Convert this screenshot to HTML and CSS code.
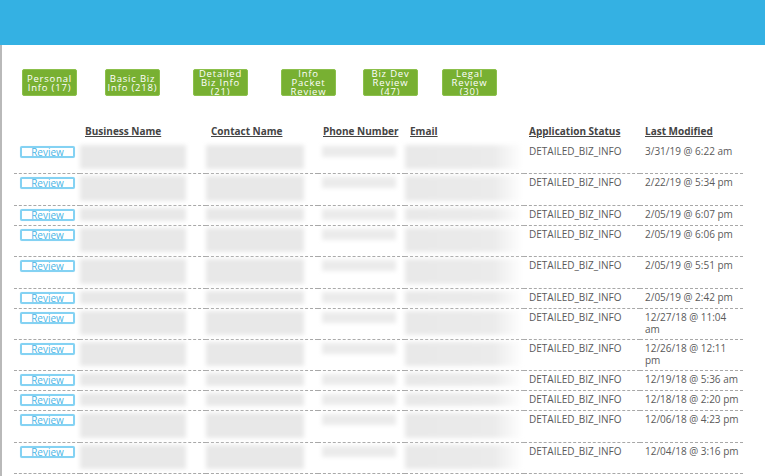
FILE: index.html
```html
<!DOCTYPE html>
<html>
<head>
<meta charset="utf-8">
<link rel="stylesheet" href="styles.css">
</head>
<body>
<div class="topbar"></div>
<div class="main">
  <div class="tabs">
    <div class="tab">Personal Info (17)</div>
    <div class="tab">Basic Biz Info (218)</div>
    <div class="tab">Detailed Biz Info (21)</div>
    <div class="tab">Info Packet Review</div>
    <div class="tab">Biz Dev Review (47)</div>
    <div class="tab">Legal Review (30)</div>
  </div>
  <table class="apps">
    <colgroup>
      <col class="c1"><col class="c2"><col class="c3"><col class="c4"><col class="c5"><col class="c6"><col class="c7">
    </colgroup>
    <thead>
      <tr>
        <th></th>
        <th>Business Name</th>
        <th>Contact Name</th>
        <th>Phone Number</th>
        <th>Email</th>
        <th>Application Status</th>
        <th>Last Modified</th>
      </tr>
    </thead>
    <tbody>
      <tr class="tall"><td><button class="review">Review</button></td><td><div class="bl biz"></div></td><td><div class="bl con"></div></td><td><div class="bl ph"></div></td><td><div class="bl em"></div></td><td>DETAILED_BIZ_INFO</td><td>3/31/19 @ 6:22 am</td></tr>
      <tr class="tall"><td><button class="review">Review</button></td><td><div class="bl biz"></div></td><td><div class="bl con"></div></td><td><div class="bl ph"></div></td><td><div class="bl em"></div></td><td>DETAILED_BIZ_INFO</td><td>2/22/19 @ 5:34 pm</td></tr>
      <tr class="short"><td><button class="review">Review</button></td><td><div class="bl biz"></div></td><td><div class="bl con"></div></td><td><div class="bl ph"></div></td><td><div class="bl em"></div></td><td>DETAILED_BIZ_INFO</td><td>2/05/19 @ 6:07 pm</td></tr>
      <tr class="tall"><td><button class="review">Review</button></td><td><div class="bl biz"></div></td><td><div class="bl con"></div></td><td><div class="bl ph"></div></td><td><div class="bl em"></div></td><td>DETAILED_BIZ_INFO</td><td>2/05/19 @ 6:06 pm</td></tr>
      <tr class="tall"><td><button class="review">Review</button></td><td><div class="bl biz"></div></td><td><div class="bl con"></div></td><td><div class="bl ph"></div></td><td><div class="bl em"></div></td><td>DETAILED_BIZ_INFO</td><td>2/05/19 @ 5:51 pm</td></tr>
      <tr class="short"><td><button class="review">Review</button></td><td><div class="bl biz"></div></td><td><div class="bl con"></div></td><td><div class="bl ph"></div></td><td><div class="bl em"></div></td><td>DETAILED_BIZ_INFO</td><td>2/05/19 @ 2:42 pm</td></tr>
      <tr class="tall"><td><button class="review">Review</button></td><td><div class="bl biz"></div></td><td><div class="bl con"></div></td><td><div class="bl ph"></div></td><td><div class="bl em"></div></td><td>DETAILED_BIZ_INFO</td><td>12/27/18 @ 11:04 am</td></tr>
      <tr class="tall"><td><button class="review">Review</button></td><td><div class="bl biz"></div></td><td><div class="bl con"></div></td><td><div class="bl ph"></div></td><td><div class="bl em"></div></td><td>DETAILED_BIZ_INFO</td><td>12/26/18 @ 12:11 pm</td></tr>
      <tr class="short"><td><button class="review">Review</button></td><td><div class="bl biz"></div></td><td><div class="bl con"></div></td><td><div class="bl ph"></div></td><td><div class="bl em"></div></td><td>DETAILED_BIZ_INFO</td><td>12/19/18 @ 5:36 am</td></tr>
      <tr class="short"><td><button class="review">Review</button></td><td><div class="bl biz"></div></td><td><div class="bl con"></div></td><td><div class="bl ph"></div></td><td><div class="bl em"></div></td><td>DETAILED_BIZ_INFO</td><td>12/18/18 @ 2:20 pm</td></tr>
      <tr class="tall"><td><button class="review">Review</button></td><td><div class="bl biz"></div></td><td><div class="bl con"></div></td><td><div class="bl ph"></div></td><td><div class="bl em"></div></td><td>DETAILED_BIZ_INFO</td><td>12/06/18 @ 4:23 pm</td></tr>
      <tr class="tall"><td><button class="review">Review</button></td><td><div class="bl biz"></div></td><td><div class="bl con"></div></td><td><div class="bl ph"></div></td><td><div class="bl em"></div></td><td>DETAILED_BIZ_INFO</td><td>12/04/18 @ 3:16 pm</td></tr>
    </tbody>
  </table>
</div>
</body>
</html>
```

FILE: styles.css
```css
html, body {
  margin: 0;
  padding: 0;
  background: #ffffff;
  font-family: "Open Sans", "Liberation Sans", sans-serif;
  overflow: hidden;
}

.topbar {
  height: 45px;
  background: #34b1e3;
}

.main {
  border-left: 2px solid #b9b9b9;
  min-height: 431px;
  box-sizing: border-box;
  padding-top: 24px;
}

.tabs {
  display: grid;
  grid-template-columns: 83px 88px 88px 82px 79px 55px;
  padding-left: 20px;
}

.tab {
  width: 55px;
  height: 27px;
  box-sizing: border-box;
  background: #78b032;
  border: 1px solid #8cc04c;
  border-radius: 2px;
  color: #ffffff;
  font-size: 9.5px;
  line-height: 9px;
  letter-spacing: 0.8px;
  text-align: center;
  display: flex;
  align-items: center;
  justify-content: center;
  overflow: hidden;
  padding: 0 1px;
}

.apps {
  margin-top: 29px;
  margin-left: 12px;
  width: 729px;
  border-collapse: collapse;
  table-layout: fixed;
}

.c1 { width: 66px; }
.c2 { width: 126px; }
.c3 { width: 112px; }
.c4 { width: 87px; }
.c5 { width: 119px; }
.c6 { width: 116px; }
.c7 { width: 103px; }

.apps th {
  text-align: left;
  font-size: 10px;
  line-height: 12px;
  font-weight: 700;
  color: #444444;
  text-decoration: underline;
  padding: 0 0 6px 5px;
  white-space: nowrap;
}

.apps td {
  vertical-align: top;
  font-size: 10px;
  line-height: 12px;
  color: #5a5a5a;
  padding: 2px 0 4px 5px;
}

.apps tbody tr {
  border-bottom: 1px dashed #a8a8a8;
}

.apps td:nth-child(1) { padding-left: 6px; }
.apps td:nth-child(2),
.apps td:nth-child(3),
.apps td:nth-child(4),
.apps td:nth-child(5) { padding-left: 0; }

.review {
  display: block;
  width: 55px;
  height: 12px;
  margin: 1px 0 0 0;
  padding: 0;
  box-sizing: border-box;
  border: 2px solid #84d2f3;
  border-radius: 2px;
  background: #ffffff;
  color: #4cb6e6;
  font-family: "Open Sans", "Liberation Sans", sans-serif;
  font-size: 10px;
  line-height: 8px;
  text-align: center;
  box-shadow: 0 0 1px #bfe7f8;
}

.bl {
  filter: blur(2px);
  background: #e8e8e8;
}

.tall .bl { height: 24.4px; }
.short .bl { height: 13px; }

.biz { width: 106px; margin-left: 0; }
.con { width: 98px; margin-left: 0; }
.tall .ph, .short .ph {
  width: 74px;
  height: 11px;
  margin-left: 4px;
  margin-top: 1px;
  background: #ebebeb;
}
.em {
  width: 118px;
  background: linear-gradient(to right, #e9e9e9 0%, #ebebeb 75%, #ffffff 100%);
}
```
